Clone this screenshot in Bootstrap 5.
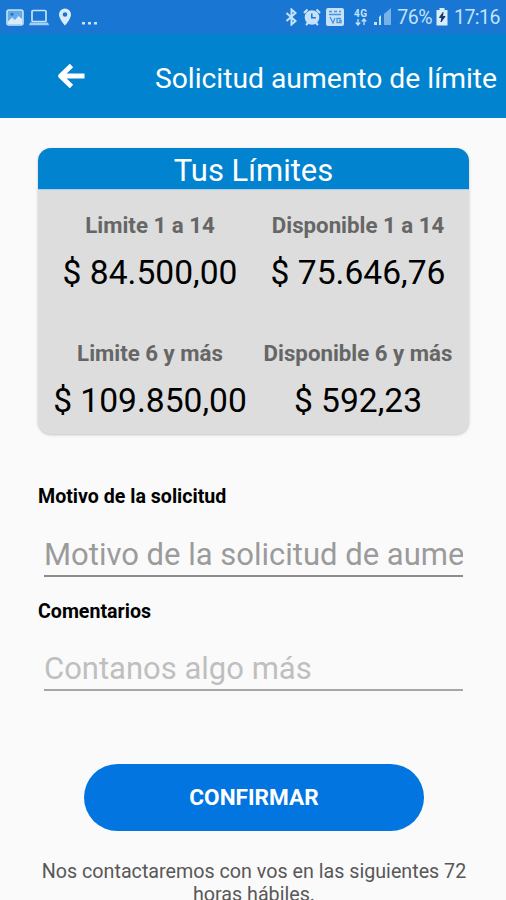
<!DOCTYPE html>
<html lang="es">
<head>
<meta charset="utf-8">
<meta name="viewport" content="width=device-width, initial-scale=1">
<title>Solicitud aumento de límite</title>
<link href="https://cdn.jsdelivr.net/npm/bootstrap@5.3.0/dist/css/bootstrap.min.css" rel="stylesheet">
<style>
body{font-family:Roboto,"Liberation Sans",sans-serif;background:#fafafa;color:#000;height:900px;overflow:hidden}
.status-bar{height:34px;background:#1976d2;color:#c5e2fa;padding:0 6px}
.status-bar svg{display:block;flex:none}
.status-text{font-size:19.5px;line-height:32px;padding-top:2px;letter-spacing:-.5px}
.pct{margin-left:3px}
.clock{margin-left:6px}
.app-bar{height:84px;background:#0283cf;padding:0 9px 0 56px}
.app-title{font-size:28.25px;line-height:40px;padding-top:6px;white-space:nowrap}
.limits{margin:30px 37px 0 38px;height:286px;background:#ddd;border-radius:13px;box-shadow:0 1px 3px rgba(0,0,0,.22)}
.limits-head{height:42px;background:#0283cf;font-size:31px;line-height:46px;border-bottom:1px solid #a9cfe6}
.limits-body{padding:21px 7px 0 8px}
.limit-cell{height:128px;white-space:nowrap}
.limit-name{font-size:22.25px;line-height:28px;font-weight:700;color:#666}
.limit-sum{font-size:33.6px;line-height:40px;margin-top:14px}
.request{padding:49px 43px 0 38px}
.request label{font-size:19.6px;line-height:28px;font-weight:700;display:block}
.line-input{font-size:31px;line-height:38px;height:54px;width:419px;margin:12px 0 0 6px;padding:12px 0 2px;border-bottom:2px solid #8c8c8c}
.line-input::placeholder{color:#9b9b9b;opacity:1}
.line-input.comment{margin-top:11px;border-color:#a6a6a6}
.line-input.comment::placeholder{color:#bfbfbf}
.second-label{margin-top:21px}
.confirm{width:340px;height:67px;background:#0275e0;font-size:22.6px;font-weight:700;margin:73px 0 0 84px}
.note{font-size:19.7px;line-height:23px;color:#585858;margin:29px 36px 0 38px}
</style>
<script src="https://cdn.jsdelivr.net/npm/bootstrap@5.3.0/dist/js/bootstrap.bundle.min.js"></script>
</head>
<body>
<div class="status-bar d-flex align-items-center justify-content-between">
  <div class="d-flex align-items-center">
    <svg width="18" height="17" viewBox="0 0 18 17"><rect x="1" y="1" width="16" height="15" rx="2" fill="#68a9e8" stroke="#c5e2fa" stroke-width="1.6"/><path d="M2 12.5l4-4 3 2.500 3.500-4L16 10v5H2z" fill="#d8ecfc"/><circle cx="6" cy="5.300" r="1.500" fill="#1976d2"/></svg>
    <svg class="ms-1" width="22" height="17" viewBox="0 0 22 17"><rect x="4" y="1.500" width="14" height="11" rx="1" fill="none" stroke="#c5e2fa" stroke-width="1.700"/><path d="M2 13.500h18l1 2.700H1z" fill="#a5cef4"/></svg>
    <svg class="ms-2" width="14" height="18" viewBox="0 0 14 18"><path fill="#d8ecfc" fill-rule="evenodd" d="M7 .5a6 6 0 0 0-6 6C1 11 7 17.500 7 17.500S13 11 13 6.500a6 6 0 0 0-6-6zm0 3.700a2.300 2.300 0 1 1 0 4.600 2.300 2.300 0 0 1 0-4.600z"/></svg>
    <svg class="ms-2" width="18" height="18" viewBox="0 0 18 18"><path fill="#c5e2fa" d="M2 14h3v2.500H2zM8 14h3v2.500H8zM14 14h3v2.500h-3z"/></svg>
  </div>
  <div class="d-flex align-items-center">
    <svg width="13" height="18" viewBox="0 0 13 18"><path d="M1.500 5l9 8L6.500 16.500v-15L10.500 5l-9 8" fill="none" stroke="#c5e2fa" stroke-width="2"/></svg>
    <svg class="ms-1" width="20" height="18" viewBox="0 0 20 18"><circle cx="10" cy="9.500" r="7.300" fill="#c5e2fa"/><path d="M2 5l3.500-3.500M18 5l-3.500-3.500M4 17l2-2M16 17l-2-2" stroke="#c5e2fa" stroke-width="2.200"/><path d="M9.800 5.500v4.300h4" fill="none" stroke="#1976d2" stroke-width="1.500"/></svg>
    <svg class="ms-1" width="18" height="18" viewBox="0 0 18 18"><rect width="18" height="18" rx="2" fill="#c5e2fa"/><path d="M3 3.500h3M8 3.500h3M13 3.500h2M3 6.500h12M4 9l3 6 2-5M15 10.500h-4v4h4v-2h-2" fill="none" stroke="#4a92dc" stroke-width="1.300"/></svg>
    <svg width="36" height="20" viewBox="0 0 36 20" class="ms-1"><text x="6" y="9.500" font-size="10" font-weight="700" fill="#c5e2fa" textLength="13">4G</text><path d="M10 12v6M7.800 15.500l2.200 2.500 2.200-2.500M16 18v-6M13.800 14.500L16 12l2.200 2.500" stroke="#c5e2fa" stroke-width="1.300" fill="none"/><path d="M26 18v-3h3v3zM31 18V10l2-2v10z" fill="#c5e2fa"/></svg>
    <svg width="10" height="20" viewBox="0 0 10 20"><path d="M0 18V7l7-6v17z" fill="#77b1ea"/></svg>
    <span class="status-text pct">76%</span>
    <svg class="ms-1" width="12" height="18" viewBox="0 0 12 18"><path d="M3.500 0h5v2H11.500v15.500H.5V2h3z" fill="#d8ecfc"/><path d="M7 4.500L3.500 9.500H6L5 14l4-5.500H6.500z" fill="#123a66" stroke="#123a66"/></svg>
    <span class="status-text clock">17:16</span>
  </div>
</div>
<header class="app-bar d-flex align-items-center justify-content-between text-white">
  <svg width="30" height="30" viewBox="0 0 30 30"><path d="M15.500 4.500L4.500 15l11 10.500M5 15H28.500" fill="none" stroke="#fff" stroke-width="4.800" stroke-linecap="butt" stroke-linejoin="round"/></svg>
  <div class="app-title">Solicitud aumento de límite</div>
</header>
<main>
  <section class="limits overflow-hidden">
    <div class="limits-head text-white text-center">Tus Límites</div>
    <div class="limits-body">
      <div class="row g-0 text-center">
        <div class="col-6 limit-cell"><div class="limit-name">Limite 1 a 14</div><div class="limit-sum">$ 84.500,00</div></div>
        <div class="col-6 limit-cell"><div class="limit-name">Disponible 1 a 14</div><div class="limit-sum">$ 75.646,76</div></div>
        <div class="col-6 limit-cell"><div class="limit-name">Limite 6 y más</div><div class="limit-sum">$ 109.850,00</div></div>
        <div class="col-6 limit-cell"><div class="limit-name">Disponible 6 y más</div><div class="limit-sum">$ 592,23</div></div>
      </div>
    </div>
  </section>
  <form class="request">
    <label for="motivo">Motivo de la solicitud</label>
    <input id="motivo" class="line-input form-control border-top-0 border-start-0 border-end-0 rounded-0 bg-transparent" placeholder="Motivo de la solicitud de aumento">
    <label class="second-label" for="comentarios">Comentarios</label>
    <input id="comentarios" class="line-input comment form-control border-top-0 border-start-0 border-end-0 rounded-0 bg-transparent" placeholder="Contanos algo más">
  </form>
  <button class="confirm btn rounded-pill text-white border-0 p-0 d-block" type="button">CONFIRMAR</button>
  <p class="note text-center">Nos contactaremos con vos en las siguientes 72 horas hábiles.</p>
</main>
</body>
</html>
